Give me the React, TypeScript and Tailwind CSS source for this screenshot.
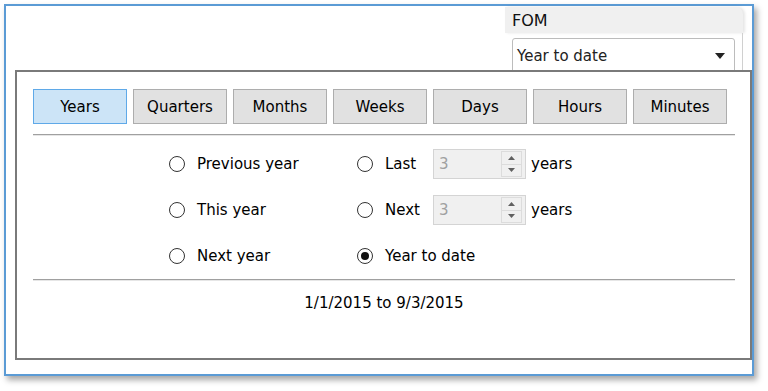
import React from 'react';

const tabs = ['Years', 'Quarters', 'Months', 'Weeks', 'Days', 'Hours', 'Minutes'];

const Radio: React.FC<{ checked?: boolean }> = ({ checked }) => (
  <span className="w-[16px] h-[16px] rounded-full border border-[#333] bg-white flex items-center justify-center shrink-0">
    {checked && <span className="w-[8px] h-[8px] rounded-full bg-[#111]" />}
  </span>
);

const SpinBox: React.FC<{ value: string }> = ({ value }) => (
  <div className="w-[93px] h-[30px] border border-[#d4d4d4] bg-[#f0f0f0] flex items-center justify-between pl-[5px] pr-[3px]">
    <span className="text-[#a0a0a0]">{value}</span>
    <div className="w-[21px] h-[26px] flex flex-col border border-[#dcdcdc]">
      <div className="flex-1 flex items-center justify-center border-b border-[#dcdcdc]">
        <svg width="7" height="4" viewBox="0 0 7 4">
          <path d="M0 4 L3.5 0 L7 4 Z" fill="#606060" />
        </svg>
      </div>
      <div className="flex-1 flex items-center justify-center">
        <svg width="7" height="4" viewBox="0 0 7 4">
          <path d="M0 0 L3.5 4 L7 0 Z" fill="#606060" />
        </svg>
      </div>
    </div>
  </div>
);

const Separator = () => (
  <div className="w-[702px] h-[2px] border-t border-[#a0a0a0] border-b border-b-[#e6e6e6]" />
);

export default function App() {
  return (
    <div
      className="w-[768px] h-[391px] bg-white pt-[4px] pl-[4px] text-[15px] text-black"
      style={{ fontFamily: '"DejaVu Sans", Verdana, sans-serif' }}
    >
      <div className="w-[750px] h-[372px] border-2 border-[#5b9bd5] bg-white shadow-[3px_4px_6px_rgba(0,0,0,0.35)]">
        {/* top area with FOM filter */}
        <div className="h-[64px] flex justify-end pr-[9px]">
          <div className="w-[238px] mt-[1px] flex flex-col">
            <div className="h-[26px] bg-[#f0f0f0] rounded-tr-[7px] pl-[7px] pt-[2px] flex items-center text-[16px] text-[#111] shadow-[2px_0_3px_rgba(0,0,0,0.1)]">
              FOM
            </div>
            <div className="h-[37px] border-r border-[#d0d0d0] pl-[7px] pr-[7px] pt-[5px]">
              <div className="h-[36px] border border-[#bcbcbc] rounded-[3px] bg-white flex items-center justify-between pl-[4px] pr-[9px] text-[#222]">
                <span>Year to date</span>
                <svg width="10" height="6" viewBox="0 0 10 6">
                  <path d="M0 0 L10 0 L5 6 Z" fill="#222" />
                </svg>
              </div>
            </div>
          </div>
        </div>

        {/* popup */}
        <div className="relative ml-[9px] w-[737px] h-[290px] border-2 border-[#7a7a7a] bg-white pl-[16px] pt-[17px]">
          <div className="flex gap-[6px]">
            {tabs.map((t, i) => (
              <div
                key={t}
                className={
                  i === 0
                    ? 'w-[94px] h-[35px] pt-[2px] border border-[#5fa9e8] bg-[#cce4f7] flex items-center justify-center'
                    : 'w-[94px] h-[35px] pt-[2px] border border-[#adadad] bg-[#e1e1e1] flex items-center justify-center'
                }
              >
                {t}
              </div>
            ))}
          </div>

          <div className="mt-[10px]">
            <Separator />
          </div>

          <div className="mt-[5px] pl-[136px] flex flex-col">
            <div className="h-[46px] flex items-center">
              <div className="w-[188px] flex items-center gap-[12px]">
                <Radio />
                <span>Previous year</span>
              </div>
              <div className="flex items-center gap-[12px]">
                <Radio />
                <span className="w-[48px]">Last</span>
              </div>
              <SpinBox value="3" />
              <span className="ml-[5px]">years</span>
            </div>
            <div className="h-[46px] flex items-center">
              <div className="w-[188px] flex items-center gap-[12px]">
                <Radio />
                <span>This year</span>
              </div>
              <div className="flex items-center gap-[12px]">
                <Radio />
                <span className="w-[48px]">Next</span>
              </div>
              <SpinBox value="3" />
              <span className="ml-[5px]">years</span>
            </div>
            <div className="h-[46px] flex items-center">
              <div className="w-[188px] flex items-center gap-[12px]">
                <Radio />
                <span>Next year</span>
              </div>
              <div className="flex items-center gap-[12px]">
                <Radio checked />
                <span>Year to date</span>
              </div>
            </div>
          </div>

          <Separator />

          <div className="w-[702px] mt-[11px] text-center">1/1/2015 to 9/3/2015</div>
        </div>
      </div>
    </div>
  );
}
